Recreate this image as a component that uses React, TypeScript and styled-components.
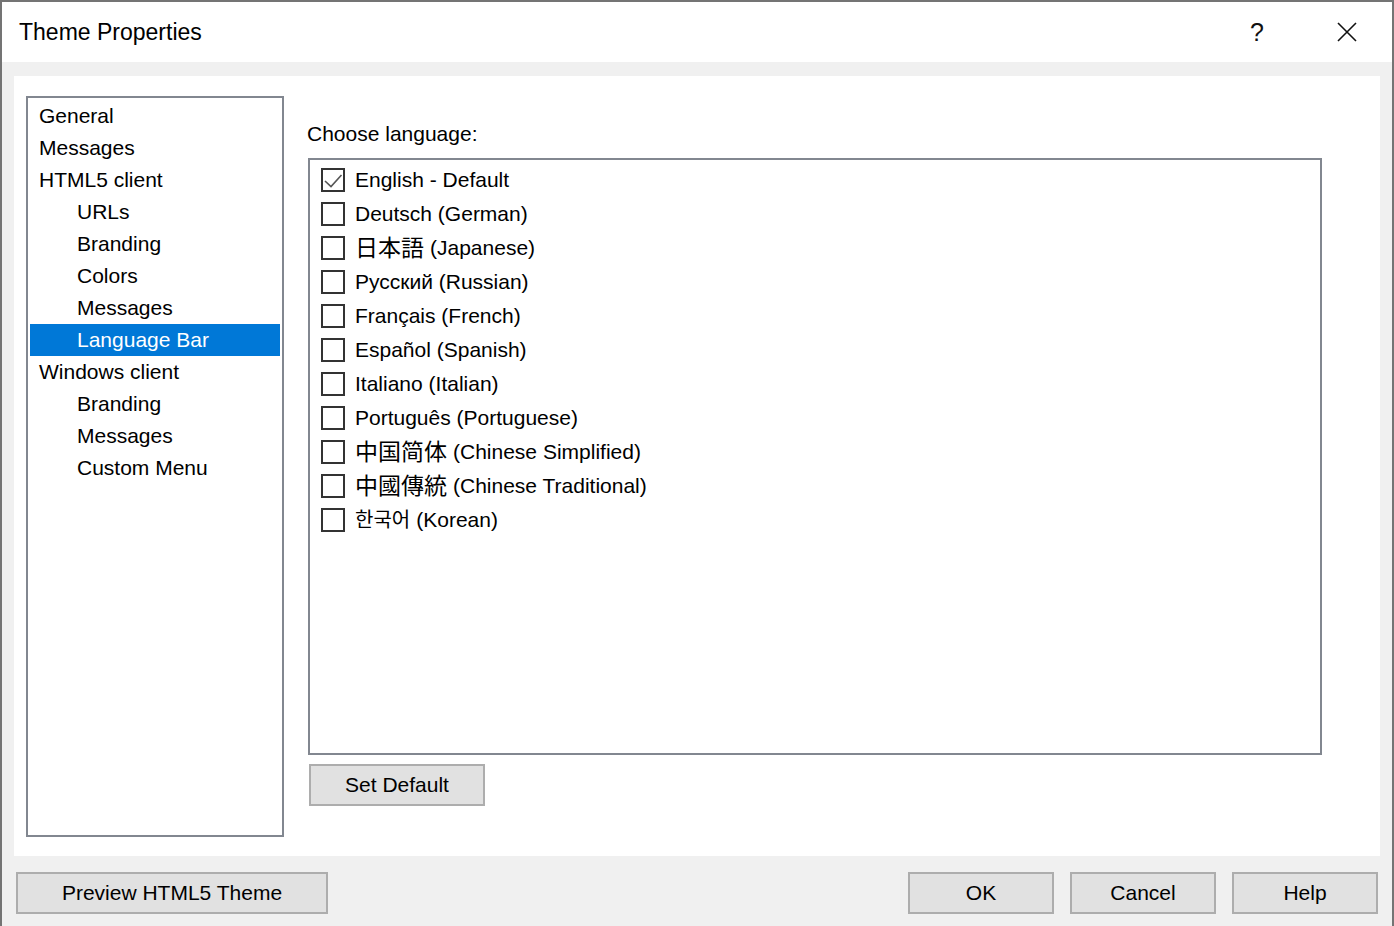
import styled, { createGlobalStyle } from 'styled-components';
import { useState } from 'react';

const GlobalStyle = createGlobalStyle`
  html, body {
    margin: 0;
    padding: 0;
    background: #f0f0f0;
  }
  body {
    font-family: 'Liberation Sans', 'Noto Sans CJK JP', Arial, sans-serif;
    color: #000;
  }
`;

const Window = styled.div`
  width: 1394px;
  height: 926px;
  box-sizing: border-box;
  border: 2px solid #747474;
  border-bottom: none;
  background: #f0f0f0;
  display: flex;
  flex-direction: column;
`;

const TitleBar = styled.div`
  height: 60px;
  flex-shrink: 0;
  background: #fff;
  display: flex;
  align-items: center;
  padding-left: 17px;
`;

const Title = styled.div`
  flex: 1;
  font-size: 23px;
  color: #000;
`;

const TitleButton = styled.div`
  width: 90px;
  height: 60px;
  display: flex;
  align-items: center;
  justify-content: center;
  font-size: 25px;
  color: #111;
`;

const Page = styled.div`
  flex: 1;
  margin: 14px 12px 0 12px;
  background: #fff;
  display: flex;
  padding: 20px 58px 19px 12px;
  gap: 24px;
`;

const Tree = styled.div`
  width: 250px;
  border: 2px solid #828790;
  padding: 2px 2px;
  display: flex;
  flex-direction: column;
`;

const TreeItem = styled.div<{ $level: number; $selected?: boolean }>`
  height: 32px;
  line-height: 32px;
  font-size: 21px;
  padding-left: ${(p) => (p.$level === 0 ? 9 : 47)}px;
  background: ${(p) => (p.$selected ? '#0078d7' : 'transparent')};
  color: ${(p) => (p.$selected ? '#fff' : '#000')};
  white-space: nowrap;
`;

const Content = styled.div`
  flex: 1;
  display: flex;
  flex-direction: column;
  padding-top: 26px;
  margin-left: -1px;
`;

const Label = styled.div`
  font-size: 21px;
  line-height: 24px;
  margin-bottom: 12px;
`;

const LangList = styled.div`
  height: 587px;
  border: 2px solid #828790;
  margin-left: 1px;
  padding: 3px 11px;
  display: flex;
  flex-direction: column;
`;

const LangRow = styled.label`
  height: 34px;
  display: flex;
  align-items: center;
  gap: 10px;
  font-size: 21px;
  white-space: nowrap;
`;

const LangText = styled.span`
  line-height: 24px;
  height: 24px;
  display: flex;
  align-items: center;
`;

const Box = styled.span`
  width: 20px;
  height: 20px;
  border: 2px solid #333;
  background: #fff;
  display: flex;
  flex-shrink: 0;
`;

const Cjk = styled.span<{ $size: number }>`
  font-size: ${(p) => p.$size}px;
  line-height: 24px;
  margin-right: 6px;
`;

const Button = styled.button<{ $width: number }>`
  width: ${(p) => p.$width}px;
  height: 42px;
  background: #e1e1e1;
  border: 2px solid #adadad;
  font-family: inherit;
  font-size: 21px;
  color: #000;
  padding: 0;
`;

const SetDefault = styled(Button)`
  margin-top: 9px;
  margin-left: 2px;
`;

const Footer = styled.div`
  height: 70px;
  flex-shrink: 0;
  box-sizing: border-box;
  display: flex;
  align-items: center;
  padding: 4px 14px 0 14px;
  gap: 16px;
`;

const Spacer = styled.div`
  flex: 1;
`;

const tree = [
  { label: 'General', level: 0 },
  { label: 'Messages', level: 0 },
  { label: 'HTML5 client', level: 0 },
  { label: 'URLs', level: 1 },
  { label: 'Branding', level: 1 },
  { label: 'Colors', level: 1 },
  { label: 'Messages', level: 1 },
  { label: 'Language Bar', level: 1 },
  { label: 'Windows client', level: 0 },
  { label: 'Branding', level: 1 },
  { label: 'Messages', level: 1 },
  { label: 'Custom Menu', level: 1 },
];

const languages = [
  { native: '', name: 'English - Default' },
  { native: '', name: 'Deutsch (German)' },
  { native: '日本語', name: '(Japanese)', size: 23 },
  { native: '', name: 'Русский (Russian)' },
  { native: '', name: 'Français (French)' },
  { native: '', name: 'Español (Spanish)' },
  { native: '', name: 'Italiano (Italian)' },
  { native: '', name: 'Português (Portuguese)' },
  { native: '中国简体', name: '(Chinese Simplified)', size: 23 },
  { native: '中國傳統', name: '(Chinese Traditional)', size: 23 },
  { native: '한국어', name: '(Korean)', size: 20 },
];

const Check = () => (
  <svg width="20" height="20" viewBox="0 0 20 20">
    <polyline points="2,11 8,16.5 18.5,5" fill="none" stroke="#555" strokeWidth="1.6" />
  </svg>
);

const CloseIcon = () => (
  <svg width="22" height="22" viewBox="0 0 22 22">
    <path d="M2 2 L20 20 M20 2 L2 20" stroke="#111" strokeWidth="1.6" />
  </svg>
);

const App = () => {
  const [checked] = useState<number[]>([0]);

  return (
    <Window>
      <GlobalStyle />
      <TitleBar>
        <Title>Theme Properties</Title>
        <TitleButton>?</TitleButton>
        <TitleButton>
          <CloseIcon />
        </TitleButton>
      </TitleBar>
      <Page>
        <Tree>
          {tree.map((t, i) => (
            <TreeItem key={i} $level={t.level} $selected={t.label === 'Language Bar'}>
              {t.label}
            </TreeItem>
          ))}
        </Tree>
        <Content>
          <Label>Choose language:</Label>
          <LangList>
            {languages.map((l, i) => (
              <LangRow key={i}>
                <Box>{checked.includes(i) ? <Check /> : null}</Box>
                <LangText>
                  {l.native ? <Cjk $size={l.size ?? 21}>{l.native}</Cjk> : null}
                  {l.name}
                </LangText>
              </LangRow>
            ))}
          </LangList>
          <SetDefault $width={176}>Set Default</SetDefault>
        </Content>
      </Page>
      <Footer>
        <Button $width={312}>Preview HTML5 Theme</Button>
        <Spacer />
        <Button $width={146}>OK</Button>
        <Button $width={146}>Cancel</Button>
        <Button $width={146}>Help</Button>
      </Footer>
    </Window>
  );
};

export default App;
